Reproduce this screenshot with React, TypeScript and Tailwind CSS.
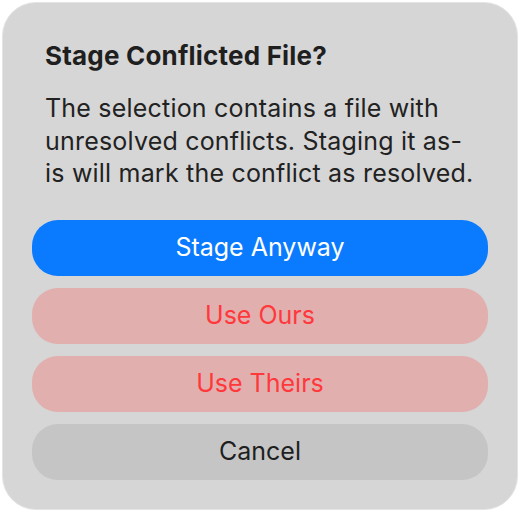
export default function App() {
  return (
    <div className="w-[520px] h-[512px] bg-white p-[2px]" style={{ fontFamily: 'Inter, "Noto Sans", sans-serif' }}>
      <div className="w-[516px] h-[508px] rounded-[34px] bg-[#d6d6d6] border border-[#e4e4e4] flex flex-col px-[29px]">
        <div className="pl-[13px] pt-[38px] text-[26px] leading-[30px] font-bold text-[#1f1f1f] tracking-[0.2px]">
          Stage Conflicted File?
        </div>
        <div className="pl-[13px] pt-[21px] text-[25px] leading-[32.5px] text-[#222] tracking-[0.2px] whitespace-nowrap">
          <div>The selection contains a file with</div>
          <div>unresolved conflicts. Staging it as-</div>
          <div>is will mark the conflict as resolved.</div>
        </div>
        <div className="mt-[30px] flex flex-col gap-[12px]">
          <button className="h-[56px] rounded-[26px] bg-[#0a7bff] text-white text-[25px]">Stage Anyway</button>
          <button className="h-[56px] rounded-[26px] bg-[#e1afae] text-[#ff383c] text-[25px]">Use Ours</button>
          <button className="h-[56px] rounded-[26px] bg-[#e1afae] text-[#ff383c] text-[25px]">Use Theirs</button>
          <button className="h-[56px] rounded-[26px] bg-[#c5c5c5] text-[#1f1f1f] text-[25px]">Cancel</button>
        </div>
      </div>
    </div>
  );
}
